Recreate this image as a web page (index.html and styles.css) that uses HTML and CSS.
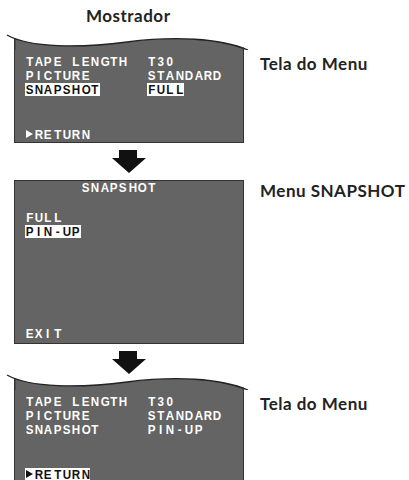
FILE: index.html
```html
<!DOCTYPE html>
<html lang="pt">
<head>
  <meta charset="UTF-8">
  <title>Mostrador - SNAPSHOT</title>
  <link rel="stylesheet" href="styles.css">
</head>
<body>

  <div class="flow">
    <h1 class="title">Mostrador</h1>
    <div></div>

    <!-- tela do menu (antes) -->
    <div class="screen">
      <svg class="wave" width="250" height="16" viewBox="0 0 250 16">
        <defs><clipPath id="clipA"><rect x="14" y="0" width="230" height="16"/></clipPath></defs>
        <path d="M7 1C30 14 80 14 127 8C174 2 220 4 248 16L7 16Z" fill="#646464" clip-path="url(#clipA)"/>
        <path d="M7 1C30 14 80 14 127 8C174 2 220 4 248 16" fill="none" stroke="#222" stroke-width="1.3"/>
        <line x1="14.75" y1="4.5" x2="14.75" y2="16" stroke="#333" stroke-width="1.5"/>
        <line x1="243.25" y1="13.5" x2="243.25" y2="16" stroke="#333" stroke-width="1.5"/>
      </svg>
      <div class="scr-body">
        <div class="row osd">TAPE LENGTH  T30</div>
        <div class="row osd">PICTURE      STANDARD</div>
        <div class="row osd"><span class="hl">SNAPSHOT</span>     <span class="hl">FULL</span></div>
        <div class="row osd bottom"><i class="tri"></i>RETURN</div>
      </div>
    </div>
    <div class="label">Tela do Menu</div>

    <div class="arrow">
      <svg width="34" height="23" viewBox="0 0 34 23"><polygon points="7,0 25,0 25,8 34,8 17,23 0,8 7,8" fill="#111"/></svg>
    </div>
    <div></div>

    <!-- menu SNAPSHOT -->
    <div class="screen">
      <div class="scr-body flat">
        <div class="row osd head">      SNAPSHOT</div>
        <div class="row osd">FULL</div>
        <div class="row osd"><span class="hl">PIN-UP</span></div>
        <div class="row osd bottom">EXIT</div>
      </div>
    </div>
    <div class="label label-flat">Menu SNAPSHOT</div>

    <div class="arrow last">
      <svg width="34" height="23" viewBox="0 0 34 23"><polygon points="7,0 25,0 25,8 34,8 17,23 0,8 7,8" fill="#111"/></svg>
    </div>
    <div></div>

    <!-- tela do menu (depois) -->
    <div class="screen">
      <svg class="wave" width="250" height="16" viewBox="0 0 250 16">
        <defs><clipPath id="clipB"><rect x="14" y="0" width="230" height="16"/></clipPath></defs>
        <path d="M7 1C30 14 80 14 127 8C174 2 220 4 248 16L7 16Z" fill="#646464" clip-path="url(#clipB)"/>
        <path d="M7 1C30 14 80 14 127 8C174 2 220 4 248 16" fill="none" stroke="#222" stroke-width="1.3"/>
        <line x1="14.75" y1="4.5" x2="14.75" y2="16" stroke="#333" stroke-width="1.5"/>
        <line x1="243.25" y1="13.5" x2="243.25" y2="16" stroke="#333" stroke-width="1.5"/>
      </svg>
      <div class="scr-body">
        <div class="row osd">TAPE LENGTH  T30</div>
        <div class="row osd">PICTURE      STANDARD</div>
        <div class="row osd">SNAPSHOT     PIN-UP</div>
        <div class="row osd bottom"><span class="hl"><i class="tri"></i>RETURN</span></div>
      </div>
    </div>
    <div class="label">Tela do Menu</div>
  </div>

  <script>
    // the on-screen display uses a fixed character grid, so put each letter in its own cell
    function toCells(node) {
      Array.from(node.childNodes).forEach(function(child) {
        if (child.nodeType === 3) {
          const frag = document.createDocumentFragment();
          for (const c of child.textContent) {
            const cell = document.createElement('span');
            cell.className = 'ch';
            cell.textContent = c;
            frag.appendChild(cell);
          }
          child.replaceWith(frag);
        } else {
          toCells(child);
        }
      });
    }
    document.querySelectorAll('.osd').forEach(toCells);
  </script>

</body>
</html>
```

FILE: styles.css
```css
body {
  margin: 0;
  background: #fff;
  font-family: "Liberation Sans", Arial, sans-serif;
  overflow: hidden;
}

.flow {
  display: grid;
  grid-template-columns: 250px auto;
}

.title {
  margin: 0;
  height: 34px;
  box-sizing: border-box;
  padding-top: 6px;
  padding-left: 86px;
  font: bold 17px/20px Lato, "Open Sans", sans-serif;
  letter-spacing: 0.5px;
  color: #222;
}

.label {
  padding-top: 20px;
  padding-left: 10px;
  font: bold 17px/20px Lato, "Open Sans", sans-serif;
  letter-spacing: 0.5px;
  color: #222;
  white-space: nowrap;
}

.label-flat {
  padding-top: 1px;
}

.wave {
  display: block;
}

.scr-body {
  margin-left: 14px;
  width: 230px;
  height: 93px;
  box-sizing: border-box;
  background: #646464;
  border: 1.5px solid #333;
  border-top: none;
  padding: 5px 0 0 9.5px;
  display: flex;
  flex-direction: column;
}

.scr-body.flat {
  height: 164px;
  border-top: 1.5px solid #333;
  padding-top: 0;
  padding-bottom: 2px;
}

.row {
  display: flex;
  height: 14px;
  white-space: pre;
  color: #fff;
  font-weight: bold;
  font-size: 13.5px;
  line-height: 13px;
}

.row.head {
  margin-bottom: 16px;
}

.row.bottom {
  margin-top: auto;
}

.ch {
  display: inline-block;
  width: 9.4px;
  height: 13px;
  text-align: center;
  transform: scaleX(0.86);
}

.hl {
  display: flex;
  height: 13px;
  background: #fff;
  color: #111;
}

.tri {
  display: inline-block;
  width: 9.4px;
  height: 13px;
  position: relative;
}

.tri::before {
  content: "";
  position: absolute;
  left: 1px;
  top: 2px;
  border-left: 7px solid currentColor;
  border-top: 4.5px solid transparent;
  border-bottom: 4.5px solid transparent;
}

.arrow {
  padding: 7px 0 7px 112px;
  height: 23px;
}

.arrow svg {
  display: block;
}

.arrow.last {
  padding-bottom: 0;
}
```
